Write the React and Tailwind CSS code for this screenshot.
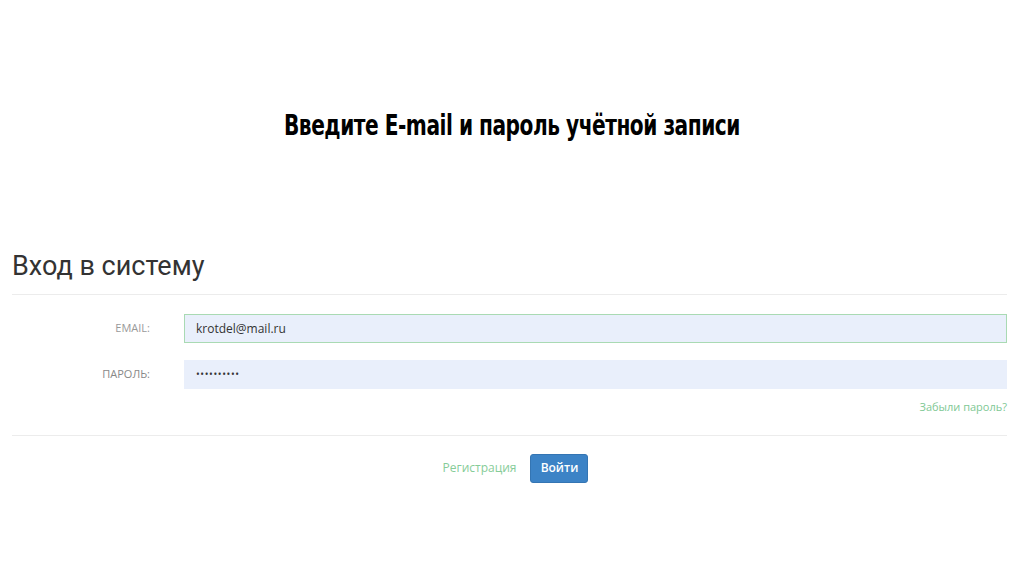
import React from 'react';

export default function App() {
  return (
    <div className="w-[1024px] h-[574px] bg-white overflow-hidden" style={{ fontFamily: '"Open Sans", "Noto Sans", sans-serif' }}>
      <div className="pt-[108px] flex justify-center">
        <h1
          className="text-[28px] leading-[36px] font-bold text-black tracking-[-0.6px] scale-x-[0.8] whitespace-nowrap"
          style={{ fontFamily: '"DejaVu Sans Condensed", "Roboto", sans-serif', fontStretch: 'condensed' }}
        >
          Введите E-mail и пароль учётной записи
        </h1>
      </div>

      <div className="mt-[104px] px-[12px] w-[1019px]">
        <h2 className="text-[27px] leading-[36px] text-[#333] pb-[10px] border-b border-[#ececec]" style={{ fontFamily: 'Roboto, sans-serif' }}>
          Вход в систему
        </h2>

        <div className="pt-[19px]">
          <div className="flex items-center h-[29px]">
            <label className="w-[138px] text-right text-[11px] text-[#999]">EMAIL:</label>
            <div className="ml-[34px] flex-1 h-[29px] bg-[#e9effb] border border-[#a9dab3] flex items-center px-[11px] text-[12px] text-[#333]">
              krotdel@mail.ru
            </div>
          </div>
          <div className="flex items-center h-[29px] mt-[17px]">
            <label className="w-[138px] text-right text-[11px] text-[#888]">ПАРОЛЬ:</label>
            <div className="ml-[34px] flex-1 h-[29px] bg-[#e9effb] flex items-center px-[12px] text-[10px] text-[#333] tracking-[0.6px]">
              ••••••••••
            </div>
          </div>
          <div className="flex justify-end mt-[10px] pb-[19px] border-b border-[#ececec]">
            <span className="text-[11px] text-[#80c894]">Забыли пароль?</span>
          </div>
        </div>

        <div className="flex justify-center items-center gap-[14px] mt-[18px] pl-[12px]">
          <span className="text-[12px] text-[#86cc98]">Регистрация</span>
          <button className="w-[58px] h-[29px] rounded-[3px] bg-[#3c83c6] border border-[#3475b3] text-white text-[12px] font-semibold">
            Войти
          </button>
        </div>
      </div>
    </div>
  );
}
